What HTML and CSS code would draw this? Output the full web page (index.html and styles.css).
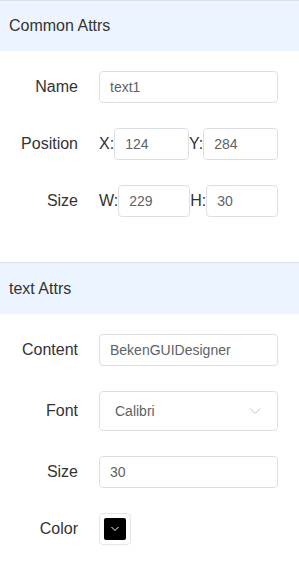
FILE: index.html
```html
<!DOCTYPE html>
<html lang="en">
<head>
    <meta charset="UTF-8">
    <title>Attributes</title>
    <link rel="stylesheet" href="styles.css">
</head>
<body>
    <div class="panel">
        <div class="section">
            <div class="section-title">Common Attrs</div>
            <div class="section-body">
                <div class="row">
                    <label class="label">Name</label>
                    <div class="field">
                        <input class="input" type="text" value="text1">
                    </div>
                </div>
                <div class="row">
                    <label class="label">Position</label>
                    <div class="field">
                        <span class="axis">X:</span>
                        <input class="input small" type="text" value="124">
                        <span class="axis">Y:</span>
                        <input class="input small" type="text" value="284">
                    </div>
                </div>
                <div class="row">
                    <label class="label">Size</label>
                    <div class="field">
                        <span class="axis">W:</span>
                        <input class="input small" type="text" value="229">
                        <span class="axis">H:</span>
                        <input class="input small" type="text" value="30">
                    </div>
                </div>
            </div>
        </div>
        <div class="section">
            <div class="section-title">text Attrs</div>
            <div class="section-body">
                <div class="row">
                    <label class="label">Content</label>
                    <div class="field">
                        <input class="input" type="text" value="BekenGUIDesigner">
                    </div>
                </div>
                <div class="row">
                    <label class="label">Font</label>
                    <div class="field">
                        <div class="select">
                            <span>Calibri</span>
                            <svg class="arrow" width="12" height="8" viewBox="0 0 12 8">
                                <path d="M1 1.5 L6 6.5 L11 1.5" fill="none" stroke="#c0c4cc" stroke-width="1"/>
                            </svg>
                        </div>
                    </div>
                </div>
                <div class="row">
                    <label class="label">Size</label>
                    <div class="field">
                        <input class="input" type="text" value="30">
                    </div>
                </div>
                <div class="row">
                    <label class="label">Color</label>
                    <div class="field">
                        <div class="color-picker">
                            <div class="color-swatch">
                                <svg width="10" height="6" viewBox="0 0 10 6">
                                    <path d="M1.5 1 L5 4.5 L8.5 1" fill="none" stroke="#fff" stroke-width="1"/>
                                </svg>
                            </div>
                        </div>
                    </div>
                </div>
            </div>
        </div>
    </div>
</body>
</html>
```

FILE: styles.css
```css
body {
    margin: 0;
    padding: 0;
    font-family: 'Liberation Sans', Arial, sans-serif;
    background: #fff;
    color: #303133;
}
.panel {
    width: 299px;
}
.section-title {
    height: 50px;
    line-height: 50px;
    border-top: 1px solid #dcdfe6;
    background-color: #ecf5ff;
    padding-left: 9px;
    font-size: 16px;
    color: #333;
}
.section + .section .section-title {
    height: 51px;
    line-height: 51px;
}
.section-body {
    padding: 20px 21px 20px 0;
}
.row {
    display: flex;
    align-items: center;
    margin-bottom: 25px;
}
.section:last-child .row:last-child {
    margin-bottom: 0;
}
.label {
    width: 78px;
    flex-shrink: 0;
    text-align: right;
    font-size: 16px;
    color: #333;
    margin-right: 21px;
}
.field {
    flex: 1;
    display: flex;
    align-items: center;
    min-width: 0;
}
.axis {
    font-size: 16px;
    color: #333;
}
.input {
    flex: 1;
    min-width: 0;
    box-sizing: border-box;
    height: 32px;
    border: 1px solid #dcdfe6;
    border-radius: 4px;
    padding: 0 10px;
    font-family: 'Liberation Sans', Arial, sans-serif;
    font-size: 14px;
    color: #606266;
    outline: none;
    background: #fff;
}
.input.small {
    width: 0;
}
.select {
    flex: 1;
    box-sizing: border-box;
    height: 40px;
    border: 1px solid #dcdfe6;
    border-radius: 4px;
    padding: 0 16px 0 15px;
    display: flex;
    align-items: center;
    justify-content: space-between;
    font-size: 14px;
    color: #606266;
}
.color-picker {
    box-sizing: border-box;
    width: 32px;
    height: 32px;
    border: 1px solid #e6e6e6;
    border-radius: 4px;
    padding: 4px;
}
.color-swatch {
    width: 100%;
    height: 100%;
    background-color: #000;
    border-radius: 2px;
    display: flex;
    align-items: center;
    justify-content: center;
}
```
